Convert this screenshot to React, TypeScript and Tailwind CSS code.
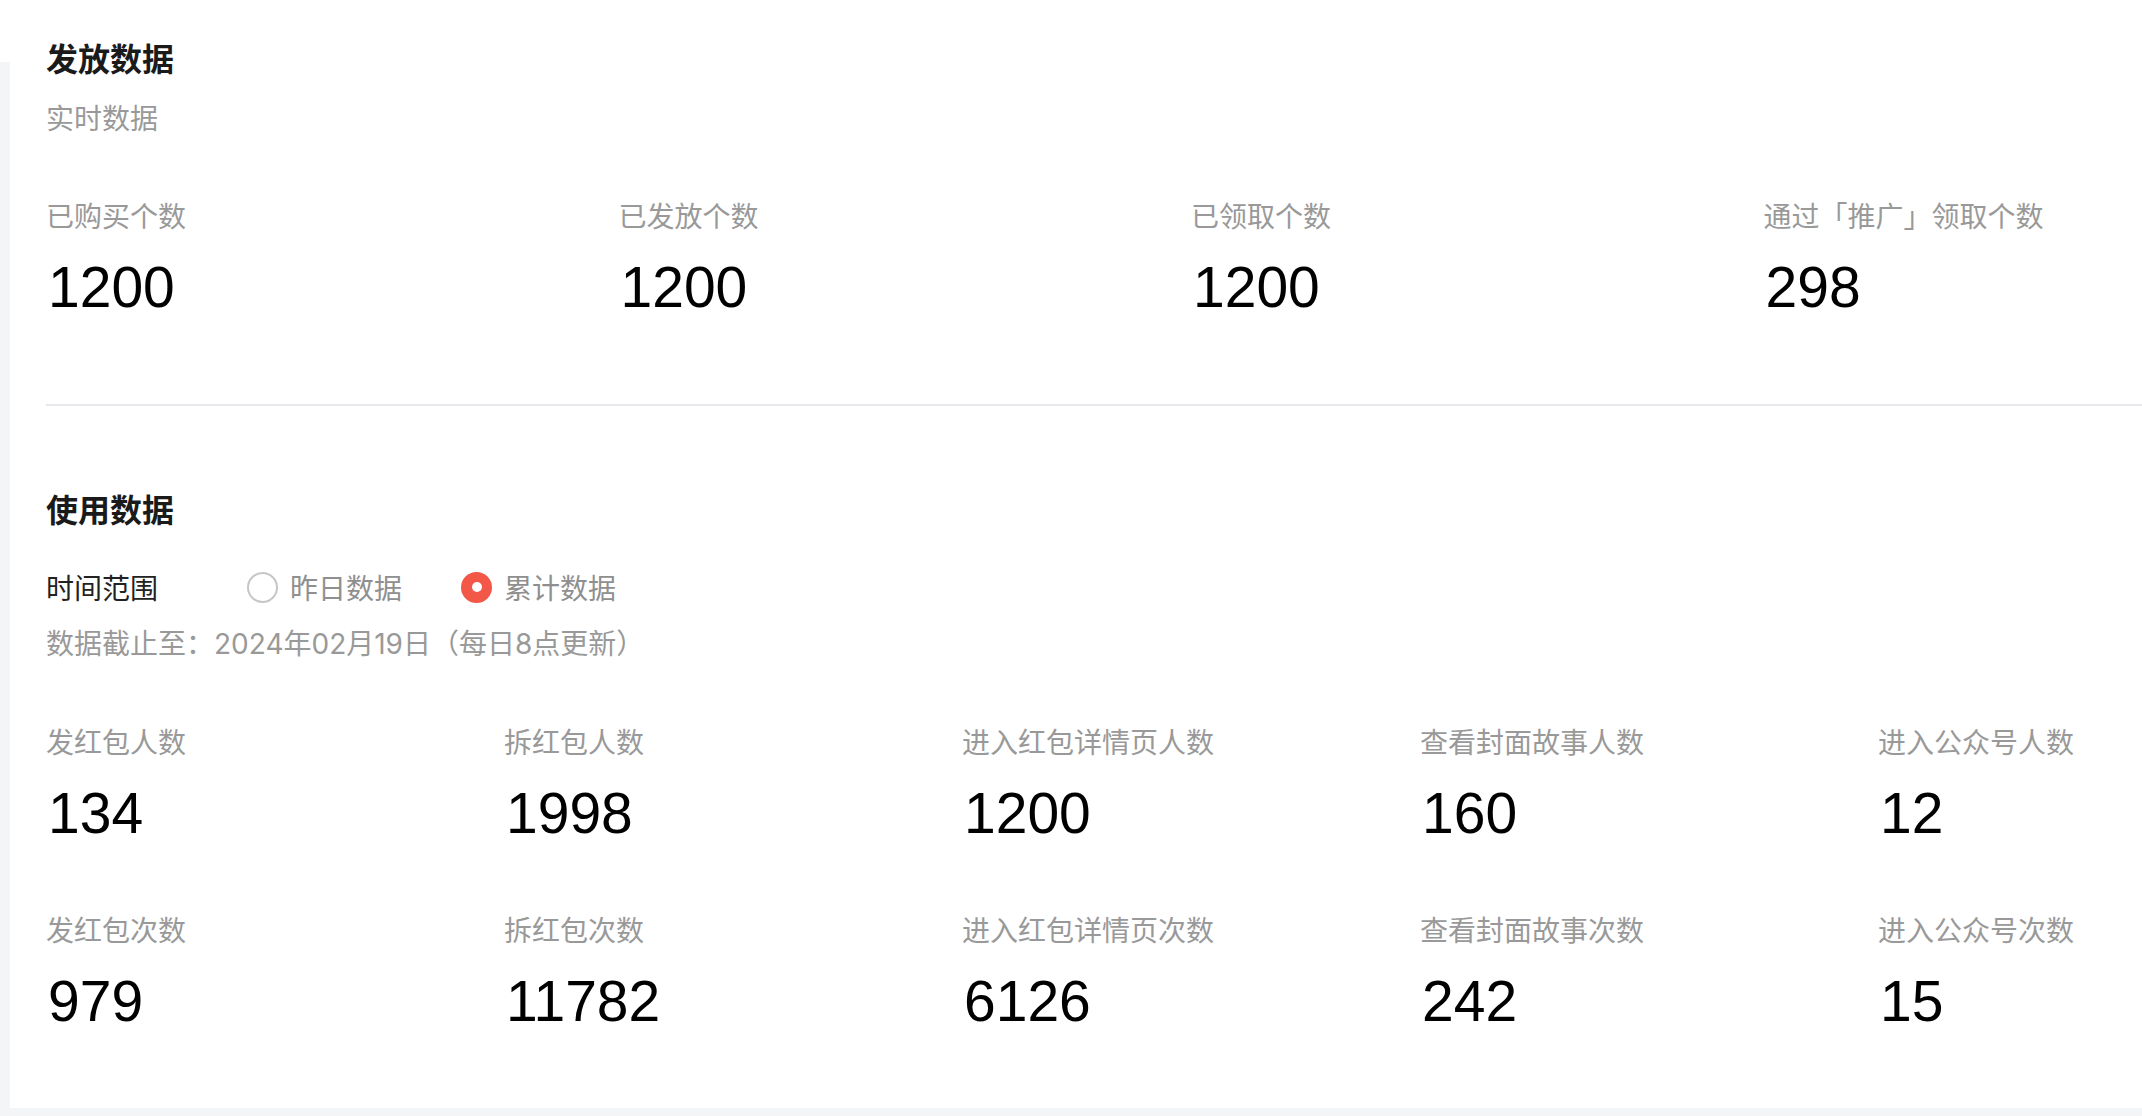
const cjk = "font-['Noto_Sans_CJK_SC','Noto_Sans',sans-serif]";
const num = "font-['Liberation_Sans','Noto_Sans_CJK_SC',sans-serif]";
const mixed = "font-['Inter','Noto_Sans_CJK_SC',sans-serif]";

const issueStats = [
  { label: "已购买个数", value: "1200" },
  { label: "已发放个数", value: "1200" },
  { label: "已领取个数", value: "1200" },
  { label: "通过「推广」领取个数", value: "298" },
];

const usageStats = [
  { label: "发红包人数", value: "134" },
  { label: "拆红包人数", value: "1998" },
  { label: "进入红包详情页人数", value: "1200" },
  { label: "查看封面故事人数", value: "160" },
  { label: "进入公众号人数", value: "12" },
  { label: "发红包次数", value: "979" },
  { label: "拆红包次数", value: "11782" },
  { label: "进入红包详情页次数", value: "6126" },
  { label: "查看封面故事次数", value: "242" },
  { label: "进入公众号次数", value: "15" },
];

function Stat({ label, value }: { label: string; value: string }) {
  return (
    <div>
      <div className={`${cjk} text-[28px] leading-[40px] text-[#999999] whitespace-nowrap`}>{label}</div>
      <div className={`${num} mt-[20px] pl-[2px] text-[57px] leading-[64px] text-black`}>{value}</div>
    </div>
  );
}

function Radio({ label, checked }: { label: string; checked?: boolean }) {
  return (
    <label className="flex items-center gap-[12px]">
      {checked ? (
        <span className="flex h-[31px] w-[31px] items-center justify-center rounded-full bg-[#f25747]">
          <span className="h-[10px] w-[10px] rounded-full bg-white" />
        </span>
      ) : (
        <span className="h-[31px] w-[31px] rounded-full border-2 border-[#c6c6c6] bg-white" />
      )}
      <span className={`${cjk} text-[28px] leading-[40px] text-[#8f8f8f]`}>{label}</span>
    </label>
  );
}

export default function App() {
  return (
    <div className="flex h-[1116px] w-[2142px] flex-col overflow-hidden bg-[#f4f5f7]">
      <div className="flex min-h-0 flex-1">
        <div className="flex w-[10px] shrink-0 flex-col">
          <div className="h-[62px] bg-white" />
        </div>
        <main className="flex-1 overflow-hidden bg-white pl-[36px] pt-[35px]">
          <div className="w-[2290px]">
            <h2 className={`${cjk} text-[32px] font-bold leading-[44px] text-[#1a1a1a]`}>发放数据</h2>
            <p className={`${cjk} mt-[18px] text-[28px] leading-[40px] text-[#999999]`}>实时数据</p>

            <div className="mt-[58px] grid grid-cols-4">
              {issueStats.map((s) => (
                <Stat key={s.label} label={s.label} value={s.value} />
              ))}
            </div>

            <div className="mt-[85px] h-[2px] bg-[#e6e8eb]" />

            <h2 className={`${cjk} mt-[80px] text-[32px] font-bold leading-[44px] text-[#1a1a1a]`}>使用数据</h2>

            <div className="mt-[37px] flex h-[40px] items-center">
              <span className={`${cjk} w-[201px] text-[28px] leading-[40px] text-[#222222]`}>时间范围</span>
              <div className="flex items-center gap-[59px]">
                <Radio label="昨日数据" />
                <Radio label="累计数据" checked />
              </div>
            </div>

            <p className={`${mixed} mt-[17px] text-[28px] leading-[40px] text-[#999999]`}>
              数据截止至：2024年02月19日（每日8点更新）
            </p>

            <div className="mt-[57px] grid grid-cols-5 gap-y-[64px]">
              {usageStats.map((s) => (
                <Stat key={s.label} label={s.label} value={s.value} />
              ))}
            </div>
          </div>
        </main>
      </div>
      <div className="h-[8px] shrink-0" />
    </div>
  );
}
